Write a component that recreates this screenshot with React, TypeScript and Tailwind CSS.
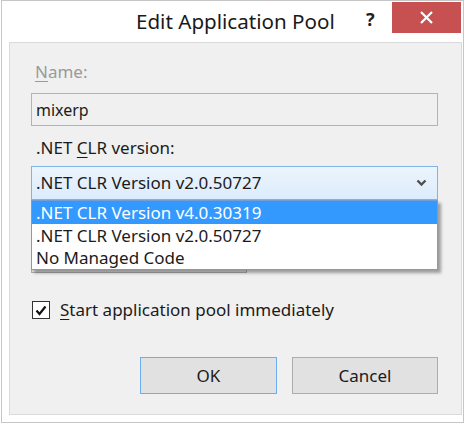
import { useState } from "react";

const FONT = "font-['Segoe_UI','Noto_Sans','Open_Sans',sans-serif]";

const VERSIONS = [
  ".NET CLR Version v4.0.30319",
  ".NET CLR Version v2.0.50727",
  "No Managed Code",
];

export default function App() {
  const [checked, setChecked] = useState(true);
  const [hovered] = useState(0);

  return (
    <div className={`w-[469px] h-[424px] bg-white ${FONT} text-[17px] leading-[22px] text-[#1b1b1b]`}>
      <div className="ml-px w-[463px] h-[423px] border border-[#c6c6c6] bg-white flex flex-col">
        {/* title bar */}
        <div className="h-[41px] flex items-start">
          <div className="pl-[134px] pt-[6px] text-[20.6px] leading-[28px] text-[#1a1a1a]">
            Edit Application Pool
          </div>
          <div className="ml-auto pt-[7px] w-[26px] text-[18px] leading-[22px] font-bold text-[#222]">
            ?
          </div>
          <button className="mt-px mr-[2px] w-[69px] h-[31px] bg-[#c75050] flex items-center justify-center">
            <svg width="13" height="13" viewBox="0 0 13 13">
              <path d="M1 1 L12 12 M12 1 L1 12" stroke="white" strokeWidth="2.2" />
            </svg>
          </button>
        </div>

        {/* content panel */}
        <div className="relative ml-[7px] mr-px h-[373px] bg-[#f0f0f0] border border-[#dadada] pl-[21px] pr-[23px]">
          <div className="mt-[18px] pl-[4px] text-[#9a9a9a]">
            <span className="underline underline-offset-[3px]">N</span>ame:
          </div>
          <div className="mt-[10px] h-[33px] border border-[#b4b4b4] bg-[#f0f0f0] flex items-center pl-[4px] text-[16px]">
            mixerp
          </div>

          <div className="mt-[11px] pl-[5px]">
            .NET <span className="underline underline-offset-[3px]">C</span>LR version:
          </div>
          <div className="mt-[7px] h-[34px] border border-[#7eb4ea] bg-gradient-to-b from-[#ecf4fc] to-[#dcecfc] flex items-center pl-[4px] pr-[10px]">
            <span>.NET CLR Version v2.0.50727</span>
            <svg className="ml-auto" width="11" height="8" viewBox="0 0 11 8">
              <path d="M1.5 1.5 L5.5 5.5 L9.5 1.5" fill="none" stroke="#505050" strokeWidth="2.4" />
            </svg>
          </div>

          {/* combo box hidden under the open list */}
          <div className="mt-[40px] w-[216px] h-[33px] border border-[#adadad] bg-[#e1e1e1]" />

          <label className="mt-[26px] flex items-center gap-[10px] cursor-default">
            <span
              onClick={() => setChecked(!checked)}
              className="ml-px w-[18px] h-[18px] border border-[#333] bg-white flex items-center justify-center"
            >
              {checked && (
                <svg width="12" height="11" viewBox="0 0 12 11">
                  <path d="M1.5 5.5 L4.5 9 L10.5 1.5" fill="none" stroke="#111" strokeWidth="2.2" />
                </svg>
              )}
            </span>
            <span>
              <span className="underline underline-offset-[3px]">S</span>tart application pool immediately
            </span>
          </label>

          <div className="mt-[36px] flex justify-end gap-[15px]">
            <button className="w-[137px] h-[37px] border border-[#6eaef0] bg-[#e1e1e1]">OK</button>
            <button className="w-[146px] h-[37px] border border-[#adadad] bg-[#e1e1e1]">Cancel</button>
          </div>

          {/* open drop-down list */}
          <div className="absolute left-[21px] top-[157px] w-[407px] bg-white border border-[#6f9fd6] shadow-[3px_3px_3px_rgba(0,0,0,0.35)]">
            {VERSIONS.map((v, i) => (
              <div
                key={v}
                className={`${i === 2 ? "h-[22px] leading-[21px]" : "h-[23px] leading-[23px]"} pl-[4px] ${
                  i === hovered ? "bg-[#3399ff] text-white" : ""
                }`}
              >
                {v}
              </div>
            ))}
          </div>
        </div>
      </div>
    </div>
  );
}
